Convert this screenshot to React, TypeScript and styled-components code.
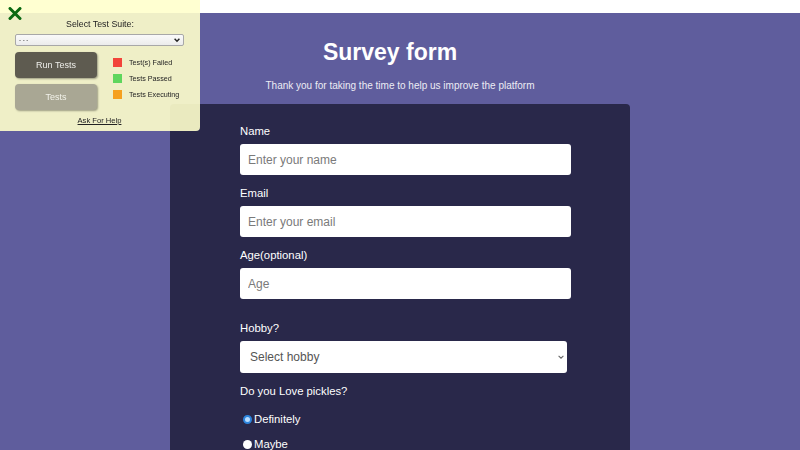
import React from 'react';
import styled, { createGlobalStyle } from 'styled-components';

const GlobalStyle = createGlobalStyle`
    html, body {
        margin: 0;
        padding: 0;
        background: #ffffff;
        font-family: "Liberation Sans", Arial, sans-serif;
    }
`;

const Page = styled.main`
    margin-top: 13px;
    min-height: 437px;
    background-color: #5f5d9d;
    display: flex;
    flex-direction: column;
    align-items: center;
    color: #fff;
`;

const Title = styled.h1`
    margin: 26px 0 0;
    padding-right: 20px;
    font-size: 23px;
    line-height: 26px;
    font-weight: 700;
`;

const Subtitle = styled.p`
    margin: 15px 0 0;
    font-size: 10px;
    line-height: 12px;
    color: #ececf4;
`;

const Card = styled.form`
    box-sizing: border-box;
    width: 460px;
    margin-top: 12px;
    padding: 20px 59px 40px 70px;
    background-color: #29284a;
    border-radius: 4px;
    display: flex;
    flex-direction: column;
`;

const Group = styled.div<{ $gapTop?: number }>`
    display: flex;
    flex-direction: column;
    margin-top: ${p => p.$gapTop || 0}px;
    margin-bottom: 11px;
`;

const Label = styled.label`
    display: block;
    font-size: 11.3px;
    line-height: 14px;
    margin-bottom: 6px;
    color: #fff;
`;

const Input = styled.input`
    box-sizing: border-box;
    width: 100%;
    height: 31px;
    border: none;
    border-radius: 3px;
    padding: 0 8px;
    font-family: inherit;
    font-size: 12px;
    color: #333;
    background: #fff;

    &::placeholder {
        color: #7a7a7a;
    }
`;

const SelectWrap = styled.div<{ $w: string }>`
    position: relative;
    flex-shrink: 0;
    width: ${p => p.$w};
`;

const HobbySelect = styled.select`
    appearance: none;
    display: block;
    box-sizing: border-box;
    width: 100%;
    height: 32px;
    border: none;
    border-radius: 3px;
    padding: 0 10px;
    font-family: inherit;
    font-size: 12px;
    color: #555;
    background: #fff;
`;

const Chevron = styled.svg<{ $right: number }>`
    position: absolute;
    right: ${p => p.$right}px;
    top: 50%;
    transform: translateY(-50%);
    pointer-events: none;
`;

const RadioRow = styled.label<{ $first?: boolean }>`
    display: flex;
    align-items: center;
    height: 25px;
    margin-top: ${p => (p.$first ? 2 : 0)}px;
    font-size: 11.3px;
    color: #fff;
`;

const Radio = styled.input`
    appearance: none;
    box-sizing: border-box;
    width: 9px;
    height: 9px;
    margin: 1px 2px 0 3px;
    border-radius: 50%;
    background: #fff;
    border: none;

    &:checked {
        background: #b7dcff;
        border: 2px solid #2c84dc;
    }
`;

/* test panel overlay */

const Panel = styled.div`
    position: fixed;
    left: 0;
    top: 0;
    width: 200px;
    height: 131px;
    box-sizing: border-box;
    padding: 7px 16px 0 15px;
    background-color: rgba(255, 255, 204, 0.9);
    border-bottom-right-radius: 4px;
    color: #222;
    display: flex;
    flex-direction: column;
`;

const Close = styled.svg`
    position: absolute;
    left: 8px;
    top: 7px;
`;

const PanelTitle = styled.div`
    text-align: center;
    font-size: 8.8px;
    line-height: 11px;
    margin: 12px 0 4px 1px;
`;

const SuiteSelect = styled.select`
    appearance: none;
    display: block;
    box-sizing: border-box;
    width: 100%;
    height: 12px;
    border: 1px solid #a8a8a8;
    border-radius: 2px;
    padding: 0 3px;
    font-family: inherit;
    font-size: 6px;
    line-height: 10px;
    color: #333;
    background: linear-gradient(#fafafa, #ececec);
`;

const PanelBody = styled.div`
    display: flex;
    gap: 16px;
    margin-top: 6px;
`;

const Buttons = styled.div`
    display: flex;
    flex-direction: column;
    gap: 6px;
`;

const TestButton = styled.button<{ $dark?: boolean }>`
    width: 82px;
    height: 26px;
    border: none;
    border-radius: 4px;
    font-family: inherit;
    font-size: 9px;
    color: ${p => (p.$dark ? '#eeeeea' : '#f2f2ea')};
    background: ${p => (p.$dark ? '#5e5b50' : '#a9a794')};
    box-shadow: 1px 1px 2px rgba(0, 0, 0, 0.35);
`;

const Legend = styled.ul`
    list-style: none;
    margin: 6px 0 0;
    padding: 0;
    display: flex;
    flex-direction: column;
    gap: 7px;
`;

const LegendItem = styled.li`
    display: flex;
    align-items: center;
    gap: 7px;
    font-size: 7.2px;
    line-height: 9px;
`;

const Swatch = styled.span<{ $color: string }>`
    width: 9px;
    height: 9px;
    background: ${p => p.$color};
`;

const Help = styled.a`
    margin-top: 6px;
    text-align: center;
    font-size: 7.6px;
    color: #222;
    text-decoration: underline;
`;

const SmallChevron = ({ right, size, color, weight }: { right: number; size: number; color: string; weight: number }) => (
    <Chevron $right={right} width={size} height={size} viewBox="0 0 10 10">
        <path d="M2 3.5 L5 6.5 L8 3.5" fill="none" stroke={color} strokeWidth={weight} />
    </Chevron>
);

const legend = [
    { label: 'Test(s) Failed', color: '#f2443a' },
    { label: 'Tests Passed', color: '#5fd65d' },
    { label: 'Tests Executing', color: '#f5a020' },
];

const App = () => {
    return (
        <>
            <GlobalStyle />
            <Page>
                <Title>Survey form</Title>
                <Subtitle>Thank you for taking the time to help us improve the platform</Subtitle>
                <Card onSubmit={e => e.preventDefault()}>
                    <Group>
                        <Label htmlFor="name">Name</Label>
                        <Input id="name" placeholder="Enter your name" />
                    </Group>
                    <Group>
                        <Label htmlFor="email">Email</Label>
                        <Input id="email" placeholder="Enter your email" />
                    </Group>
                    <Group>
                        <Label htmlFor="age">Age(optional)</Label>
                        <Input id="age" placeholder="Age" />
                    </Group>
                    <Group $gapTop={11}>
                        <Label htmlFor="hobby">Hobby?</Label>
                        <SelectWrap $w="calc(100% - 4px)">
                            <HobbySelect id="hobby" defaultValue="">
                                <option value="">Select hobby</option>
                                <option>Reading</option>
                                <option>Gaming</option>
                            </HobbySelect>
                            <SmallChevron right={2} size={8} color="#666" weight={1.3} />
                        </SelectWrap>
                    </Group>
                    <Group>
                        <Label>Do you Love pickles?</Label>
                        <RadioRow $first>
                            <Radio type="radio" name="pickles" defaultChecked />
                            Definitely
                        </RadioRow>
                        <RadioRow>
                            <Radio type="radio" name="pickles" />
                            Maybe
                        </RadioRow>
                    </Group>
                </Card>
            </Page>

            <Panel>
                <Close width="14" height="13" viewBox="0 0 14 13">
                    <path d="M2 1.5 L12 11.5 M12 1.5 L2 11.5" stroke="#0b6a12" strokeWidth="3" strokeLinecap="round" />
                </Close>
                <PanelTitle>Select Test Suite:</PanelTitle>
                <SelectWrap $w="100%">
                    <SuiteSelect defaultValue="">
                        <option value="">- - -</option>
                    </SuiteSelect>
                    <SmallChevron right={3} size={8} color="#222" weight={1.8} />
                </SelectWrap>
                <PanelBody>
                    <Buttons>
                        <TestButton $dark>Run Tests</TestButton>
                        <TestButton>Tests</TestButton>
                    </Buttons>
                    <Legend>
                        {legend.map(({ label, color }) => (
                            <LegendItem key={label}>
                                <Swatch $color={color} />
                                {label}
                            </LegendItem>
                        ))}
                    </Legend>
                </PanelBody>
                <Help href="#">Ask For Help</Help>
            </Panel>
        </>
    );
};

export default App;
